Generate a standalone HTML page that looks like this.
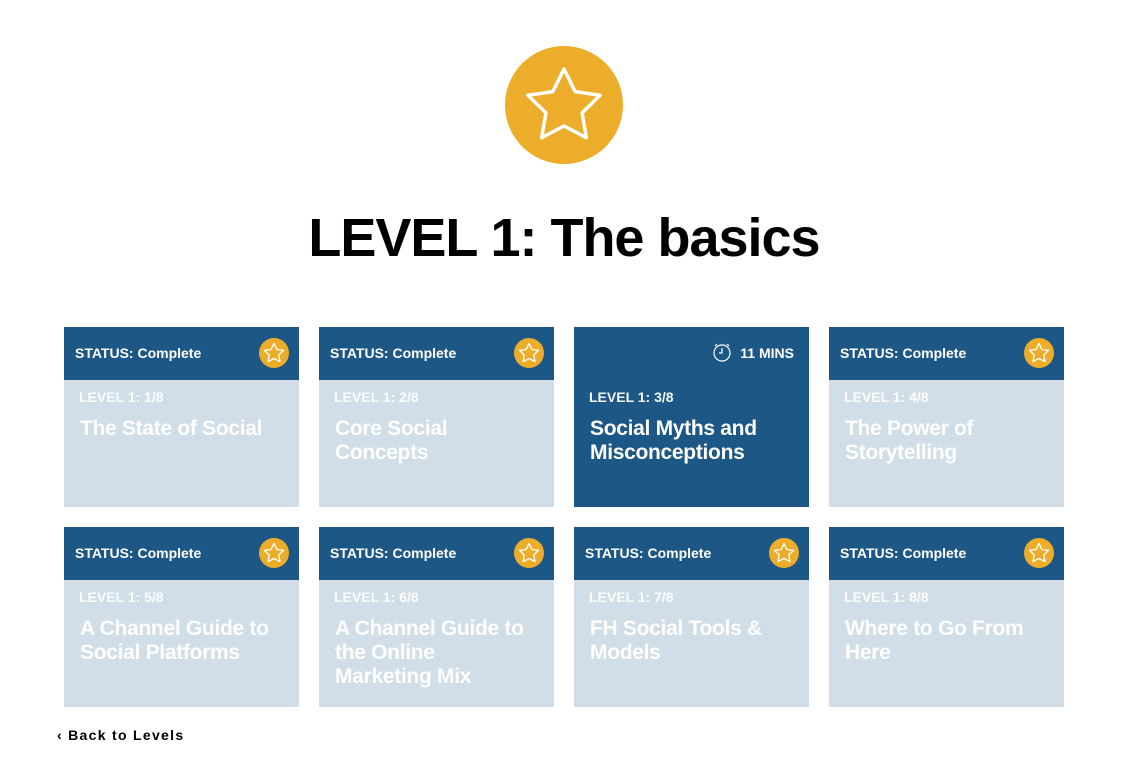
<!DOCTYPE html>
<html><head><meta charset="utf-8"><style>
body{margin:0;width:1146px;height:777px;background:#fff;font-family:"Liberation Sans",sans-serif;position:relative;overflow:hidden}
h1{position:absolute;left:0;width:1128px;top:206px;margin:0;text-align:center;font-size:54px;font-weight:bold;letter-spacing:-1px;color:#000;line-height:64px}
.card{position:absolute;width:235px;height:180px;background:#d1dde7}
.hd{height:53px;background:#1c5785;color:#fff;font-size:14px;font-weight:bold;line-height:53px;padding-left:11px;position:relative;white-space:nowrap}
.hd svg.st{position:absolute;right:10px;top:11px}
.lv{color:#fff;font-size:14px;font-weight:bold;margin:9px 0 0 15px;opacity:.95}
.tt{color:#fff;font-size:21px;font-weight:bold;margin:12px 0 0 16px;line-height:24px;letter-spacing:-0.3px;width:200px}
.act{background:#1c5785}
.back{position:absolute;left:57px;top:727px;font-size:14px;font-weight:bold;letter-spacing:1.3px}
</style></head><body>
<svg style="position:absolute;left:505px;top:46px" width="118" height="118" viewBox="0 0 118 118"><circle cx="59" cy="59" r="59" fill="#ecae2a"/><polygon points="59,23 70.2,45.6 95.1,49.3 77.1,66.9 81.3,91.7 59,80 36.7,91.7 40.9,66.9 22.9,49.3 47.8,45.6" fill="none" stroke="#fff" stroke-width="3.5" stroke-linejoin="round"/></svg>
<h1>LEVEL 1: The basics</h1>
<div id="c"></div>
<script>
var d=[["1/8","The State of Social"],["2/8","Core Social Concepts"],["3/8","Social Myths and Misconceptions"],["4/8","The Power of Storytelling"],["5/8","A Channel Guide to Social Platforms"],["6/8","A Channel Guide to the Online Marketing Mix"],["7/8","FH Social Tools &amp; Models"],["8/8","Where to Go From Here"]];
var star='<svg class="st" width="30" height="30" viewBox="0 0 30 30"><circle cx="15" cy="15" r="15" fill="#ecae2a"/><polygon points="15,5.5 17.9,11.5 24.5,12.4 19.8,17 20.9,23.6 15,20.5 9.1,23.6 10.2,17 5.5,12.4 12.1,11.5" fill="none" stroke="#fff" stroke-width="1.3" stroke-linejoin="round"/></svg>';
var clock='<span style="position:absolute;right:15px;top:0;font-size:14px;white-space:nowrap"><svg width="20" height="20" viewBox="0 0 20 20" style="vertical-align:-4px;margin-right:8px"><circle cx="10" cy="11" r="8" fill="none" stroke="#fff" stroke-width="1.2"/><path d="M10 6v5h-3M3 4l2-2M17 4l-2-2" fill="none" stroke="#fff" stroke-width="1.2"/></svg>11 MINS</span>';
var h='';
d.forEach(function(x,i){var l=64+(i%4)*255,t=327+Math.floor(i/4)*200,a=i==2;
h+='<div class="card'+(a?' act':'')+'" style="left:'+l+'px;top:'+t+'px"><div class="hd">'+(a?clock:'STATUS: Complete'+star)+'</div><div class="lv">LEVEL 1: '+x[0]+'</div><div class="tt">'+x[1]+'</div></div>';});
document.getElementById('c').innerHTML=h;
</script>
<div class="back">‹ Back to Levels</div>
</body></html>
